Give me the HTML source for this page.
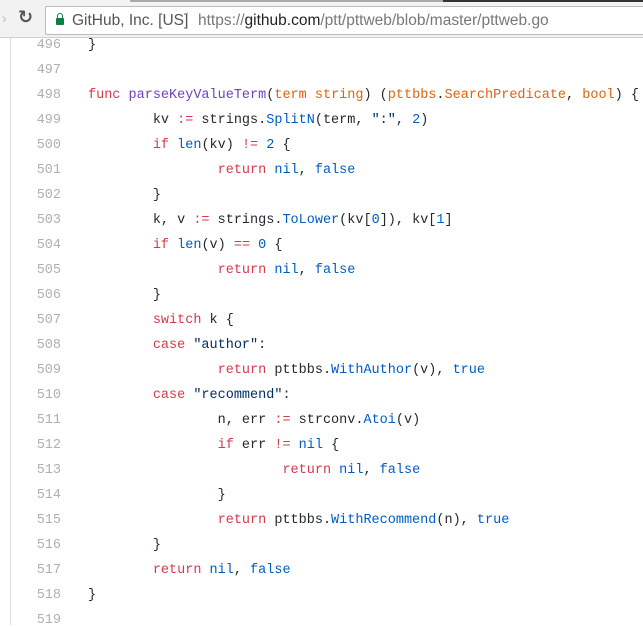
<!DOCTYPE html>
<html><head><meta charset="utf-8"><style>
html,body{margin:0;padding:0;width:643px;height:625px;overflow:hidden;background:#fff}
.bar{position:absolute;left:0;top:0;width:643px;height:37px;background:#f2f2f2;border-bottom:1px solid #d0d0d0;z-index:2}
.bar .top{position:absolute;left:130px;top:0;width:313px;height:2px;background:#aaa}
.bar .top2{position:absolute;left:443px;top:0;width:200px;height:2px;background:#333}
.addr{position:absolute;left:45px;top:6px;width:610px;height:27px;background:#fff;border:1px solid #bbb;border-radius:2px;font-family:"Liberation Sans",sans-serif;font-size:15.5px;line-height:27px;color:#555;white-space:nowrap}
.lock{position:absolute;left:10px;top:11px;width:8px;height:7px;background:#0b8043;border-radius:1px}
.lock:before{content:"";position:absolute;left:1px;top:-5px;width:4px;height:5px;border:1px solid #0b8043;border-bottom:none;border-radius:3px 3px 0 0}
.code{position:absolute;left:0;top:38px;font-family:"Liberation Mono",monospace;font-size:13.5px;color:#24292e}
.ln{position:absolute;left:0;width:61px;text-align:right;color:#b0b0b0}
.l{position:absolute;left:88px;white-space:pre;tab-size:8}
.k{color:#d73a49}.f{color:#6f42c1}.o{color:#e36209}.b{color:#005cc5}.s{color:#032f62}
.vline{position:absolute;left:10px;top:38px;width:1px;height:587px;background:#e0e0e0}
</style></head><body>
<div class="bar"><div class="top"></div><div class="top2"></div>
<div style="position:absolute;left:2px;top:10px;color:#bbb;font:14px 'Liberation Sans',sans-serif">›</div>
<div style="position:absolute;left:18px;top:7px;color:#555;font:bold 18px 'DejaVu Sans',sans-serif">↻</div>
<div class="addr"><div class="lock"></div><span style="position:absolute;left:26px;color:#555">GitHub, Inc. [US]</span><span style="position:absolute;left:141px;top:5px;width:1px;height:17px;background:#ccc"></span><span style="position:absolute;left:152px;color:#777">https://<span style="color:#222">github.com</span>/ptt/pttweb/blob/master/pttweb.go</span></div>
</div>
<div class="vline"></div>
<div class="code">
<div class="ln" style="top:0">496</div><div class="l" style="top:0">}</div>
<div class="ln" style="top:25px">497</div>
<div class="ln" style="top:50px">498</div><div class="l" style="top:50px"><span class="k">func</span> <span class="f">parseKeyValueTerm</span>(<span class="o">term</span> <span class="o">string</span>) (<span class="o">pttbbs</span>.<span class="o">SearchPredicate</span>, <span class="o">bool</span>) {</div>
<div class="ln" style="top:75px">499</div><div class="l" style="top:75px">	kv <span class="k">:=</span> strings.<span class="b">SplitN</span>(term, <span class="s">":"</span>, <span class="b">2</span>)</div>
<div class="ln" style="top:100px">500</div><div class="l" style="top:100px">	<span class="k">if</span> <span class="b">len</span>(kv) <span class="k">!=</span> <span class="b">2</span> {</div>
<div class="ln" style="top:125px">501</div><div class="l" style="top:125px">		<span class="k">return</span> <span class="b">nil</span>, <span class="b">false</span></div>
<div class="ln" style="top:150px">502</div><div class="l" style="top:150px">	}</div>
<div class="ln" style="top:175px">503</div><div class="l" style="top:175px">	k, v <span class="k">:=</span> strings.<span class="b">ToLower</span>(kv[<span class="b">0</span>]), kv[<span class="b">1</span>]</div>
<div class="ln" style="top:200px">504</div><div class="l" style="top:200px">	<span class="k">if</span> <span class="b">len</span>(v) <span class="k">==</span> <span class="b">0</span> {</div>
<div class="ln" style="top:225px">505</div><div class="l" style="top:225px">		<span class="k">return</span> <span class="b">nil</span>, <span class="b">false</span></div>
<div class="ln" style="top:250px">506</div><div class="l" style="top:250px">	}</div>
<div class="ln" style="top:275px">507</div><div class="l" style="top:275px">	<span class="k">switch</span> k {</div>
<div class="ln" style="top:300px">508</div><div class="l" style="top:300px">	<span class="k">case</span> <span class="s">"author"</span>:</div>
<div class="ln" style="top:325px">509</div><div class="l" style="top:325px">		<span class="k">return</span> pttbbs.<span class="b">WithAuthor</span>(v), <span class="b">true</span></div>
<div class="ln" style="top:350px">510</div><div class="l" style="top:350px">	<span class="k">case</span> <span class="s">"recommend"</span>:</div>
<div class="ln" style="top:375px">511</div><div class="l" style="top:375px">		n, err <span class="k">:=</span> strconv.<span class="b">Atoi</span>(v)</div>
<div class="ln" style="top:400px">512</div><div class="l" style="top:400px">		<span class="k">if</span> err <span class="k">!=</span> <span class="b">nil</span> {</div>
<div class="ln" style="top:425px">513</div><div class="l" style="top:425px">			<span class="k">return</span> <span class="b">nil</span>, <span class="b">false</span></div>
<div class="ln" style="top:450px">514</div><div class="l" style="top:450px">		}</div>
<div class="ln" style="top:475px">515</div><div class="l" style="top:475px">		<span class="k">return</span> pttbbs.<span class="b">WithRecommend</span>(n), <span class="b">true</span></div>
<div class="ln" style="top:500px">516</div><div class="l" style="top:500px">	}</div>
<div class="ln" style="top:525px">517</div><div class="l" style="top:525px">	<span class="k">return</span> <span class="b">nil</span>, <span class="b">false</span></div>
<div class="ln" style="top:550px">518</div><div class="l" style="top:550px">}</div>
<div class="ln" style="top:575px">519</div>
</div>
</body></html>
